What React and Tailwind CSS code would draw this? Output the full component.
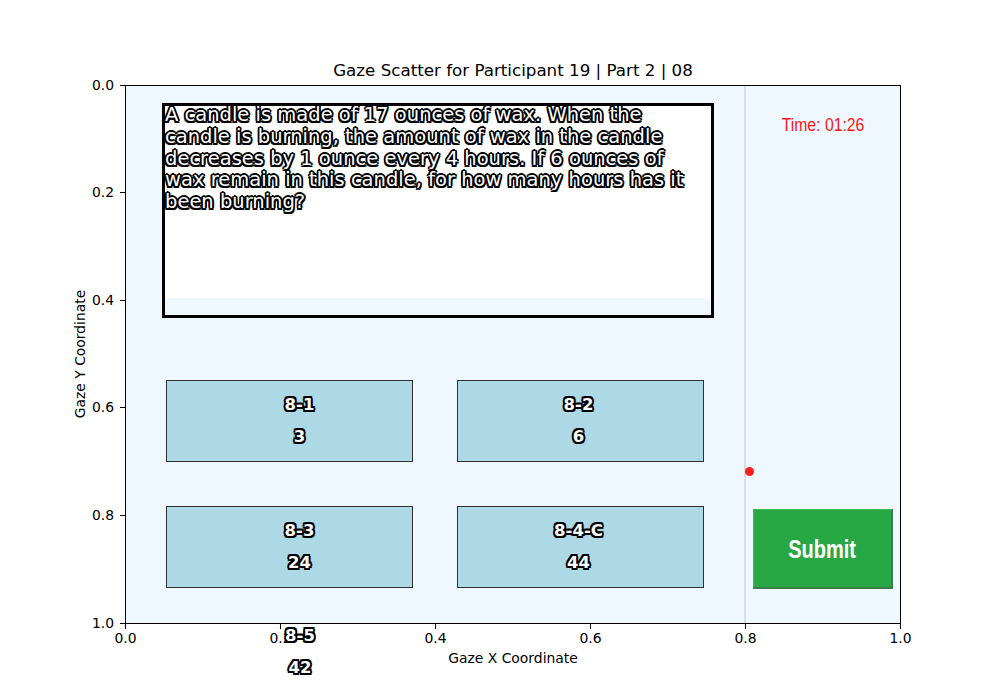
import React from "react";

const xTicks = [
  { label: "0.0", x: -1 },
  { label: "0.2", x: 154 },
  { label: "0.4", x: 309 },
  { label: "0.6", x: 464 },
  { label: "0.8", x: 619 },
  { label: "1.0", x: 774 },
];

const yTicks = [
  { label: "0.0", y: -1 },
  { label: "0.2", y: 106 },
  { label: "0.4", y: 214 },
  { label: "0.6", y: 321 },
  { label: "0.8", y: 429 },
  { label: "1.0", y: 537 },
];

const questionLines = [
  "A candle is made of 17 ounces of wax. When the",
  "candle is burning, the amount of wax in the candle",
  "decreases by 1 ounce every 4 hours. If 6 ounces of",
  "wax remain in this candle, for how many hours has it",
  "been burning?",
];

// left column labels sit a little right of centre, right column a little left
const options = [
  { code: "8-1", value: "3", shift: "pl-[20px]" },
  { code: "8-2", value: "6", shift: "pr-[4px]" },
  { code: "8-3", value: "24", shift: "pl-[20px]" },
  { code: "8-4-C", value: "44", shift: "pr-[4px]" },
];

const thinOutline =
  "[text-shadow:-1.5px_-1.5px_0_#000,1.5px_-1.5px_0_#000,-1.5px_1.5px_0_#000,1.5px_1.5px_0_#000,0_-1.8px_0_#000,0_1.8px_0_#000,-1.8px_0_0_#000,1.8px_0_0_#000]";
const boldOutline =
  "[text-shadow:-1.6px_-1.6px_0_#000,1.6px_-1.6px_0_#000,-1.6px_1.6px_0_#000,1.6px_1.6px_0_#000,0_-2px_0_#000,0_2px_0_#000,-2px_0_0_#000,2px_0_0_#000]";

const OptionLabel = ({ code, value }) => (
  <div className={`flex flex-col items-center text-white font-bold text-[16.5px] leading-[32px] ${boldOutline}`}>
    <span>{code}</span>
    <span>{value}</span>
  </div>
);

export default function App() {
  return (
    <div className="w-[1000px] h-[700px] bg-white pt-[58px] font-['DejaVu_Sans',sans-serif] text-black overflow-hidden">
      <div className="ml-[125px] w-[776px] h-[27px] text-center text-[16.7px] leading-[24px]">
        Gaze Scatter for Participant 19 | Part 2 | 08
      </div>

      <div className="relative ml-[125px] w-[776px] h-[539px] border border-black bg-[#eff7ff] flex">
        {/* left side: question + answers */}
        <div className="w-[618px] pl-[36px] pt-[17px] flex flex-col">
          <div className="w-[552px] h-[215px] border-[3px] border-black flex flex-col">
            <div className="flex-1 bg-white">
              <div className={`-mt-[2px] text-white text-[19.5px] leading-[21.75px] whitespace-nowrap ${thinOutline}`}>
                {questionLines.map((line) => (
                  <div key={line}>{line}</div>
                ))}
              </div>
            </div>
            <div className="h-[17px] bg-[#eff7ff]" />
          </div>

          <div className="mt-[62px] ml-[4px] grid grid-cols-[247px_247px] auto-rows-[82px] gap-x-[44px] gap-y-[44px]">
            {options.map((opt) => (
              <div
                key={opt.code}
                className={`bg-[#add8e6] border border-[#2f2f2f] flex items-center justify-center ${opt.shift}`}
              >
                <OptionLabel code={opt.code} value={opt.value} />
              </div>
            ))}
          </div>
        </div>

        {/* screen divider */}
        <div className="w-[2px] self-stretch bg-[#d8dee4]" />

        {/* right side: timer + submit */}
        <div className="relative flex-1 flex flex-col pt-[27px] pb-[34px]">
          <div className="text-center font-['Liberation_Sans',sans-serif] text-[19px] leading-[24px] text-[#f61818] scale-x-[0.83]">
            Time: 01:26
          </div>
          <div className="mt-auto ml-[7px] w-[140px] h-[80px] bg-[#28a745] border-t border-l border-[#3fb35a] border-r-2 border-b-2 border-r-[#3b7d4a] border-b-[#3b7d4a] flex items-center justify-center">
            <span className="font-['Liberation_Sans',sans-serif] font-bold text-white text-[26px] leading-none scale-x-[0.77]">
              Submit
            </span>
          </div>

          {/* gaze point */}
          <div className="absolute left-[-1px] top-[381px] w-[9px] h-[9px] rounded-full bg-[#ff1e1e]" />
        </div>

        {/* y ticks */}
        {yTicks.map((t) => (
          <div key={t.label} className="absolute left-[-6px] w-[5px] h-px bg-black" style={{ top: t.y }} />
        ))}
        {yTicks.map((t) => (
          <div
            key={`yl-${t.label}`}
            className="absolute left-[-46px] w-[34px] text-right text-[13.9px] leading-[16px]"
            style={{ top: t.y - 8 }}
          >
            {t.label}
          </div>
        ))}

        {/* x ticks */}
        {xTicks.map((t) => (
          <div key={t.label} className="absolute top-[538px] w-px h-[5px] bg-black" style={{ left: t.x }} />
        ))}
        {xTicks.map((t) => (
          <div
            key={`xl-${t.label}`}
            className="absolute top-[544px] w-[40px] text-center text-[13.9px] leading-[16px]"
            style={{ left: t.x - 19.5 }}
          >
            {t.label}
          </div>
        ))}

        {/* axis labels */}
        <div className="absolute left-0 right-0 top-[564px] text-center text-[13.9px] leading-[16px]">
          Gaze X Coordinate
        </div>
        <div className="absolute left-[-46px] top-[268px] -translate-x-1/2 -translate-y-1/2 -rotate-90 whitespace-nowrap text-[13.9px] leading-[16px]">
          Gaze Y Coordinate
        </div>

        {/* fifth option label, spilled past the axes */}
        <div className="absolute left-[124px] top-[534px] w-[100px] z-10">
          <OptionLabel code="8-5" value="42" />
        </div>
      </div>
    </div>
  );
}
